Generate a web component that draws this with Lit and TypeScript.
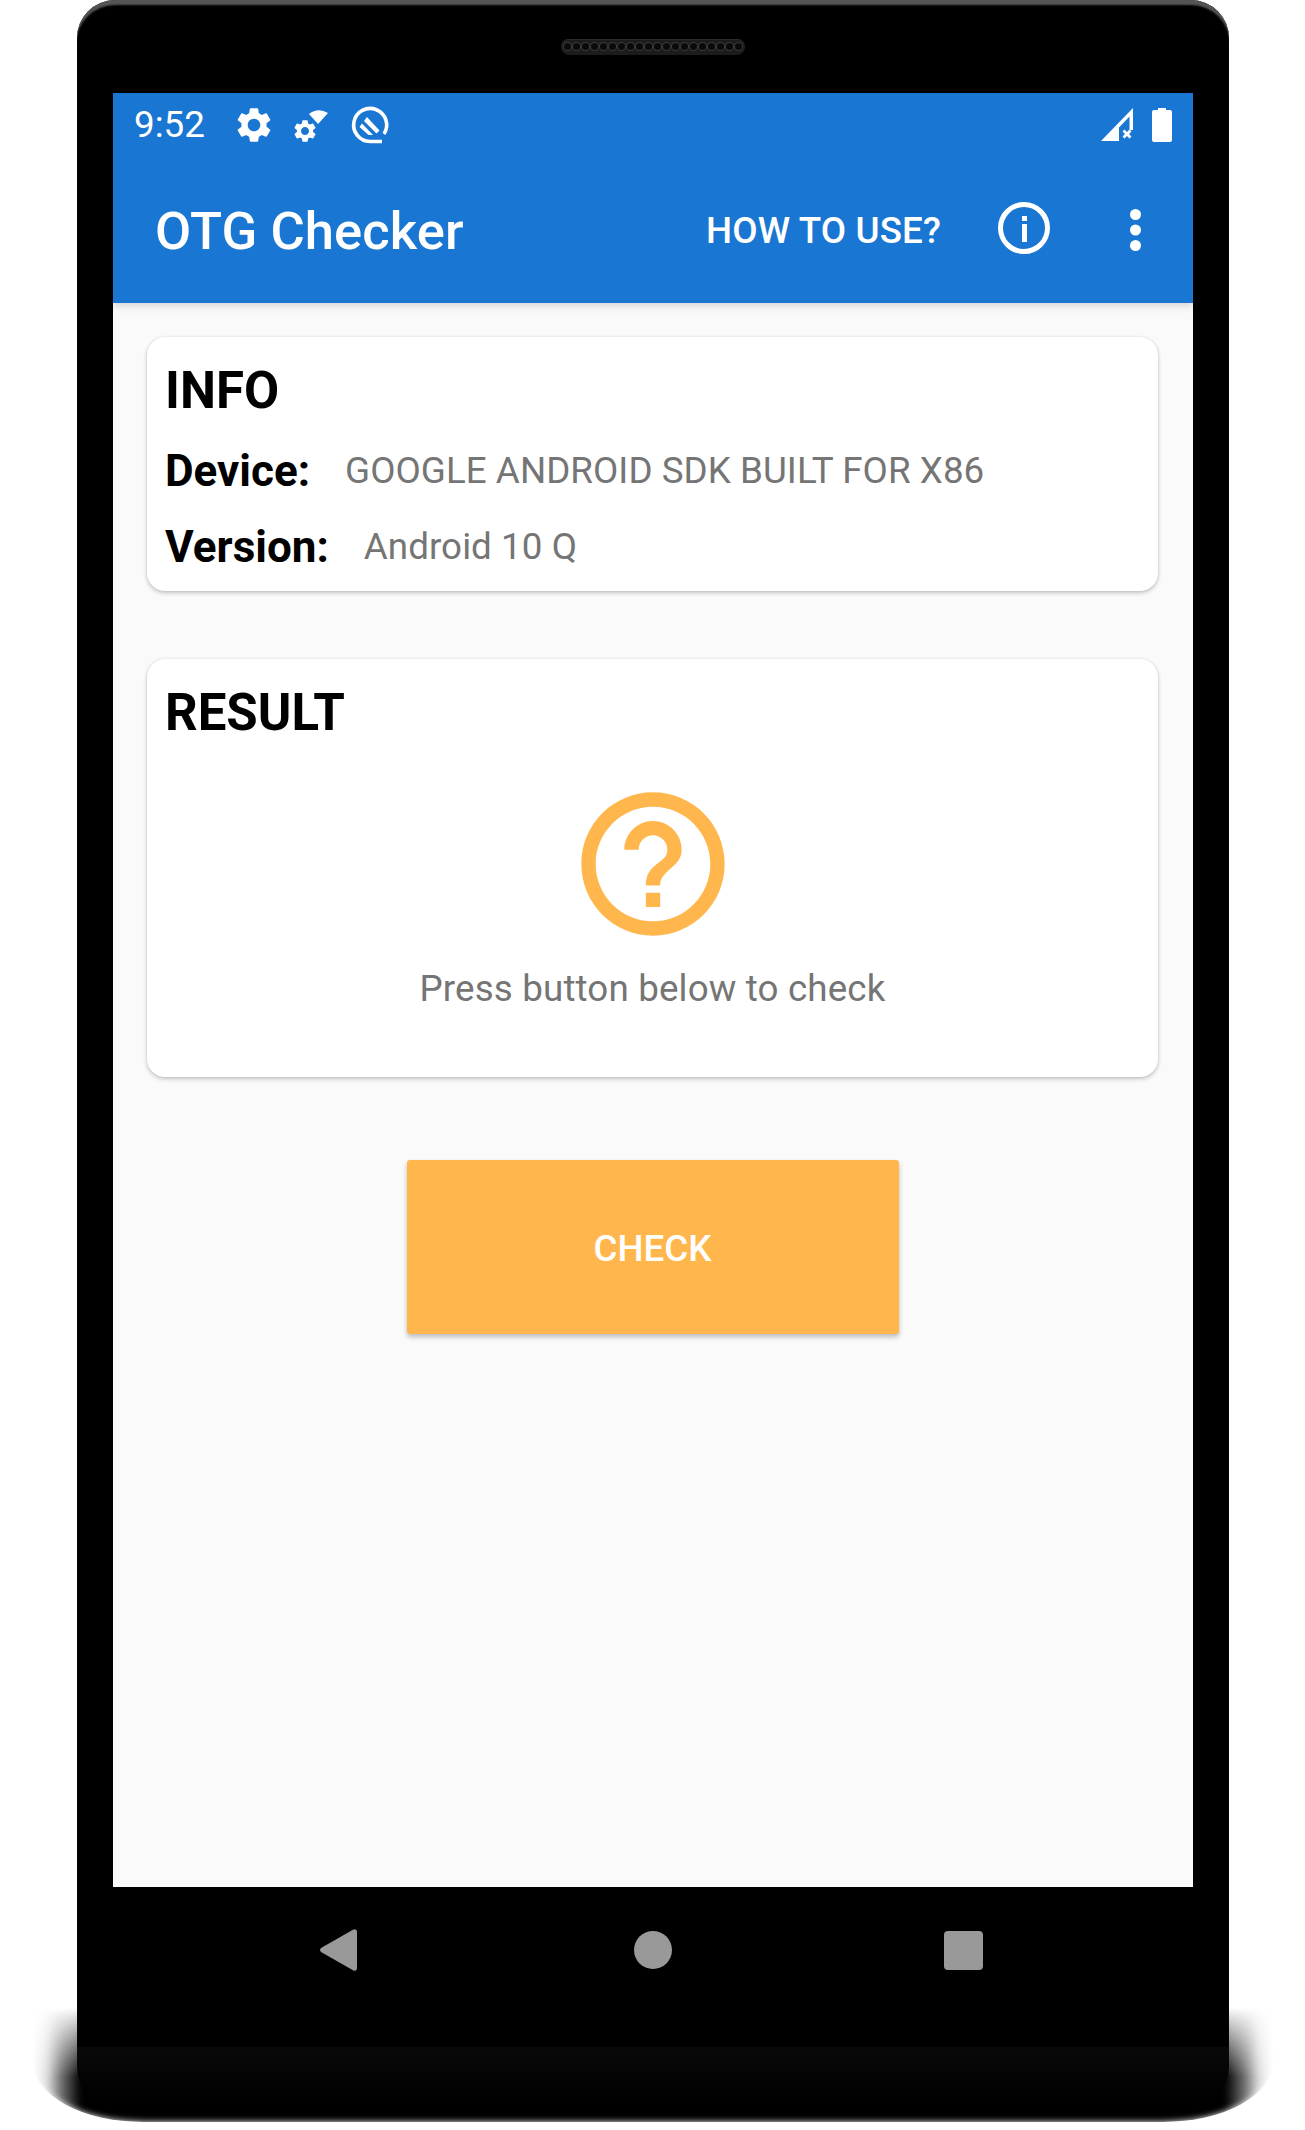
import { LitElement, html, css } from "lit";
import { customElement } from "lit/decorators.js";

const GEAR =
  "M19.14 12.94c.04-.3.06-.61.06-.94 0-.32-.02-.64-.07-.94l2.03-1.58c.18-.14.23-.41.12-.61l-1.92-3.32c-.12-.22-.37-.29-.59-.22l-2.39.96c-.5-.38-1.03-.7-1.62-.94l-.36-2.54c-.04-.24-.24-.41-.48-.41h-3.84c-.24 0-.43.17-.47.41l-.36 2.54c-.59.24-1.13.57-1.62.94l-2.39-.96c-.22-.08-.47 0-.59.22L2.74 8.87c-.12.21-.08.47.12.61l2.03 1.58c-.05.3-.09.63-.09.94s.02.64.07.94l-2.03 1.58c-.18.14-.23.41-.12.61l1.92 3.32c.12.22.37.29.59.22l2.39-.96c.5.38 1.03.7 1.62.94l.36 2.54c.05.24.24.41.48.41h3.84c.24 0 .44-.17.47-.41l.36-2.54c.59-.24 1.13-.56 1.62-.94l2.39.96c.22.08.47 0 .59-.22l1.92-3.32c.12-.22.07-.47-.12-.61l-2.01-1.58zM12 15.6c-1.98 0-3.6-1.62-3.6-3.6s1.62-3.6 3.6-3.6 3.6 1.62 3.6 3.6-1.62 3.6-3.6 3.6z";
const HELP =
  "M11 18h2v-2h-2v2zm1-16C6.48 2 2 6.48 2 12s4.48 10 10 10 10-4.48 10-10S17.52 2 12 2zm0 18c-4.41 0-8-3.59-8-8s3.59-8 8-8 8 3.59 8 8-3.59 8-8 8zm0-14c-2.21 0-4 1.79-4 4h2c0-1.1.9-2 2-2s2 .9 2 2c0 2-3 1.75-3 5h2c0-2.25 3-2.5 3-5 0-2.21-1.79-4-4-4z";

@customElement("app-root")
export default class AppRoot extends LitElement {
  static styles = css`
    :host {
      display: block;
      width: 1305px;
      height: 2130px;
      box-sizing: border-box;
      padding-left: 77px;
      background: #fff;
      overflow: hidden;
      font-family: Roboto, "Liberation Sans", sans-serif;
      isolation: isolate;
    }

    .phone {
      position: relative;
      width: 1152px;
      height: 2105px;
      box-sizing: border-box;
      padding: 0 36px;
      border-radius: 38px;
      background: linear-gradient(to bottom, #000 2047px, #090909 2047px, #000 2100px);
      box-shadow: inset 0 6px 2px -1px #555;
    }

    /* soft floor shadow under the lower part of the body */
    .phone::before {
      content: "";
      position: absolute;
      z-index: -1;
      left: -44px;
      right: -44px;
      bottom: -17px;
      height: 115px;
      border-radius: 0 0 110px 110px / 0 0 60px 60px;
      background: linear-gradient(
        to right,
        transparent,
        rgba(0, 0, 0, 0.12) 14px,
        rgba(0, 0, 0, 0.55) 28px,
        #000 48px,
        #000 calc(100% - 48px),
        rgba(0, 0, 0, 0.55) calc(100% - 28px),
        rgba(0, 0, 0, 0.12) calc(100% - 14px),
        transparent
      );
      filter: blur(3px);
      -webkit-mask-image: linear-gradient(to bottom, transparent 0, #000 70px);
      mask-image: linear-gradient(to bottom, transparent 0, #000 70px);
    }

    .earpiece {
      height: 93px;
      display: flex;
      justify-content: center;
      align-items: center;
    }

    .speaker {
      width: 184px;
      height: 16px;
      box-sizing: border-box;
      padding: 0 3px;
      display: flex;
      align-items: center;
      justify-content: space-between;
      border-radius: 8px;
      background: #1c1c1c;
      box-shadow: inset 0 1px 1px #2e2e2e;
    }

    .hole {
      width: 7px;
      height: 7px;
      border-radius: 50%;
      background: #0a0a0a;
      box-shadow: 0 0 0 1px #3a3a3a;
    }

    .screen {
      height: 1794px;
      background: #fafafa;
      display: flex;
      flex-direction: column;
      align-items: stretch;
    }

    .top {
      background: #1976d2;
      box-shadow: 0 3px 8px rgba(0, 0, 0, 0.15);
      color: #fff;
    }

    .status {
      height: 63px;
      padding: 0 21px;
      display: flex;
      align-items: center;
    }

    .time {
      font-size: 36.75px;
      line-height: 44px;
      margin-right: 28px;
    }

    .status svg {
      display: block;
      fill: #fff;
      flex: none;
      overflow: visible;
    }

    .status .gear {
      margin-right: 20px;
    }

    .status .wifi {
      margin-right: 22px;
    }

    .status .signal {
      margin-left: auto;
      margin-right: 19px;
    }

    .app-bar {
      height: 147px;
      padding: 0 0 0 42px;
      display: flex;
      align-items: center;
    }

    .title {
      font-size: 52.5px;
      font-weight: 500;
      line-height: 62px;
      letter-spacing: 0.1px;
      padding-top: 2px;
      margin-right: auto;
    }

    .action {
      font-size: 36.75px;
      font-weight: 500;
      line-height: 44px;
      letter-spacing: 0.15px;
      padding-top: 2px;
      margin-right: 57px;
    }

    .info-icon {
      display: block;
      margin-right: 80px;
      margin-top: -3px;
    }

    .dots {
      display: block;
      margin-right: 52px;
    }

    .body {
      flex: 1;
      padding: 34px 35px 0 34px;
      display: flex;
      flex-direction: column;
    }

    .card {
      box-sizing: border-box;
      padding: 23px 18px 0;
      border-radius: 18px;
      background: #fff;
      box-shadow: 0 2px 4px rgba(0, 0, 0, 0.22), 0 0 2px rgba(0, 0, 0, 0.1);
    }

    .card-info {
      height: 254px;
    }

    .card-result {
      height: 418px;
      margin-top: 68px;
    }

    h2 {
      margin: 0;
      font-size: 51px;
      font-weight: 700;
      line-height: 62px;
      color: #000;
    }

    .row {
      display: flex;
      align-items: center;
      height: 56px;
      margin-top: 20px;
    }

    .row-first {
      margin-top: 21px;
    }

    .label {
      font-size: 44px;
      font-weight: 700;
      color: #000;
      margin-right: 35px;
    }

    .value {
      font-size: 36.75px;
      letter-spacing: 0.05px;
      color: #757575;
      padding-bottom: 2px;
    }

    .result {
      display: flex;
      flex-direction: column;
      align-items: center;
      margin-top: 34px;
    }

    .result svg {
      display: block;
      fill: #ffb74d;
    }

    .hint {
      margin-top: 14px;
      font-size: 36.75px;
      line-height: 50px;
      letter-spacing: 0.14px;
      color: #757575;
    }

    .check {
      align-self: center;
      width: 492px;
      height: 174px;
      margin-top: 83px;
      padding: 2px 0 0;
      border: none;
      border-radius: 3px;
      background: #ffb74d;
      color: #fff;
      font-family: inherit;
      font-size: 36.75px;
      font-weight: 500;
      box-shadow: 0 3px 5px rgba(0, 0, 0, 0.25);
    }

    .nav {
      display: flex;
      justify-content: center;
      align-items: center;
      padding: 42px 3px 0 0;
      height: 42px;
    }

    .nav svg {
      display: block;
      fill: #999;
    }

    .nav-circle {
      width: 38px;
      height: 38px;
      margin: 0 272px 0 277px;
      border-radius: 50%;
      background: #999;
    }

    .nav-square {
      width: 39px;
      height: 39px;
      border-radius: 4px;
      background: #999;
    }
  `;

  render() {
    const holes = Array.from({ length: 20 });
    return html`
      <div class="phone">
        <div class="earpiece">
          <div class="speaker">${holes.map(() => html`<span class="hole"></span>`)}</div>
        </div>
        <div class="screen">
          <div class="top">
            <div class="status">
              <span class="time">9:52</span>
              <svg class="gear" width="42" height="42" viewBox="0 0 24 24"><path d=${GEAR}></path></svg>
              <svg class="wifi" width="34" height="34" viewBox="0 0 34 34">
                <svg x="-3.5" y="9.5" width="27" height="27" viewBox="0 0 24 24"><path d=${GEAR}></path></svg>
                <path d="M14 6Q23 -1 33 5L23 16Z"></path>
              </svg>
              <svg width="38" height="38" viewBox="0 0 38 38">
                <path d="M33 28A16.5 16.5 0 1 0 19 35.5H31" fill="none" stroke="#fff" stroke-width="3.6"></path>
                <path d="M16 11L28.5 24.5 25.5 27.5 13 15Z"></path>
                <path d="M11 17.5L22 29H17.5L8.5 21Z"></path>
              </svg>
              <svg class="signal" width="32" height="34" viewBox="0 0 32 34">
                <path d="M0 33L32 0V22H28.5V8.5L18 19.5V33Z"></path>
                <path d="M21.5 23.5l2-2 2.5 2.6 2.5-2.6 2 2-2.5 2.6 2.5 2.5-2 2-2.5-2.5-2.5 2.5-2-2 2.5-2.5z"></path>
              </svg>
              <svg width="20" height="34" viewBox="0 0 20 34">
                <path d="M6 0h8v2h4a2 2 0 0 1 2 2v28a2 2 0 0 1-2 2H2a2 2 0 0 1-2-2V4a2 2 0 0 1 2-2h4z"></path>
              </svg>
            </div>
            <div class="app-bar">
              <span class="title">OTG Checker</span>
              <span class="action">HOW TO USE?</span>
              <svg class="info-icon" width="52" height="52" viewBox="0 0 52 52" fill="#fff">
                <circle cx="26" cy="26" r="23.5" fill="none" stroke="#fff" stroke-width="5"></circle>
                <rect x="24" y="22" width="5" height="18"></rect>
                <rect x="24" y="14" width="5" height="5"></rect>
              </svg>
              <svg class="dots" width="11" height="42" viewBox="0 0 11 42" fill="#fff">
                <circle cx="5.5" cy="5.5" r="5.5"></circle>
                <circle cx="5.5" cy="21" r="5.5"></circle>
                <circle cx="5.5" cy="36.5" r="5.5"></circle>
              </svg>
            </div>
          </div>
          <div class="body">
            <section class="card card-info">
              <h2>INFO</h2>
              <div class="row row-first">
                <span class="label">Device:</span>
                <span class="value">GOOGLE ANDROID SDK BUILT FOR X86</span>
              </div>
              <div class="row">
                <span class="label">Version:</span>
                <span class="value">Android 10 Q</span>
              </div>
            </section>
            <section class="card card-result">
              <h2>RESULT</h2>
              <div class="result">
                <svg width="172" height="172" viewBox="0 0 24 24"><path d=${HELP}></path></svg>
                <span class="hint">Press button below to check</span>
              </div>
            </section>
            <button class="check">CHECK</button>
          </div>
        </div>
        <div class="nav">
          <svg width="37" height="42" viewBox="0 0 37 42">
            <path d="M33 .8a2.4 2.4 0 0 1 4 1.8v36.8a2.4 2.4 0 0 1-4 1.8L1 23a2.6 2.6 0 0 1 0-4z"></path>
          </svg>
          <span class="nav-circle"></span>
          <span class="nav-square"></span>
        </div>
      </div>
    `;
  }
}
